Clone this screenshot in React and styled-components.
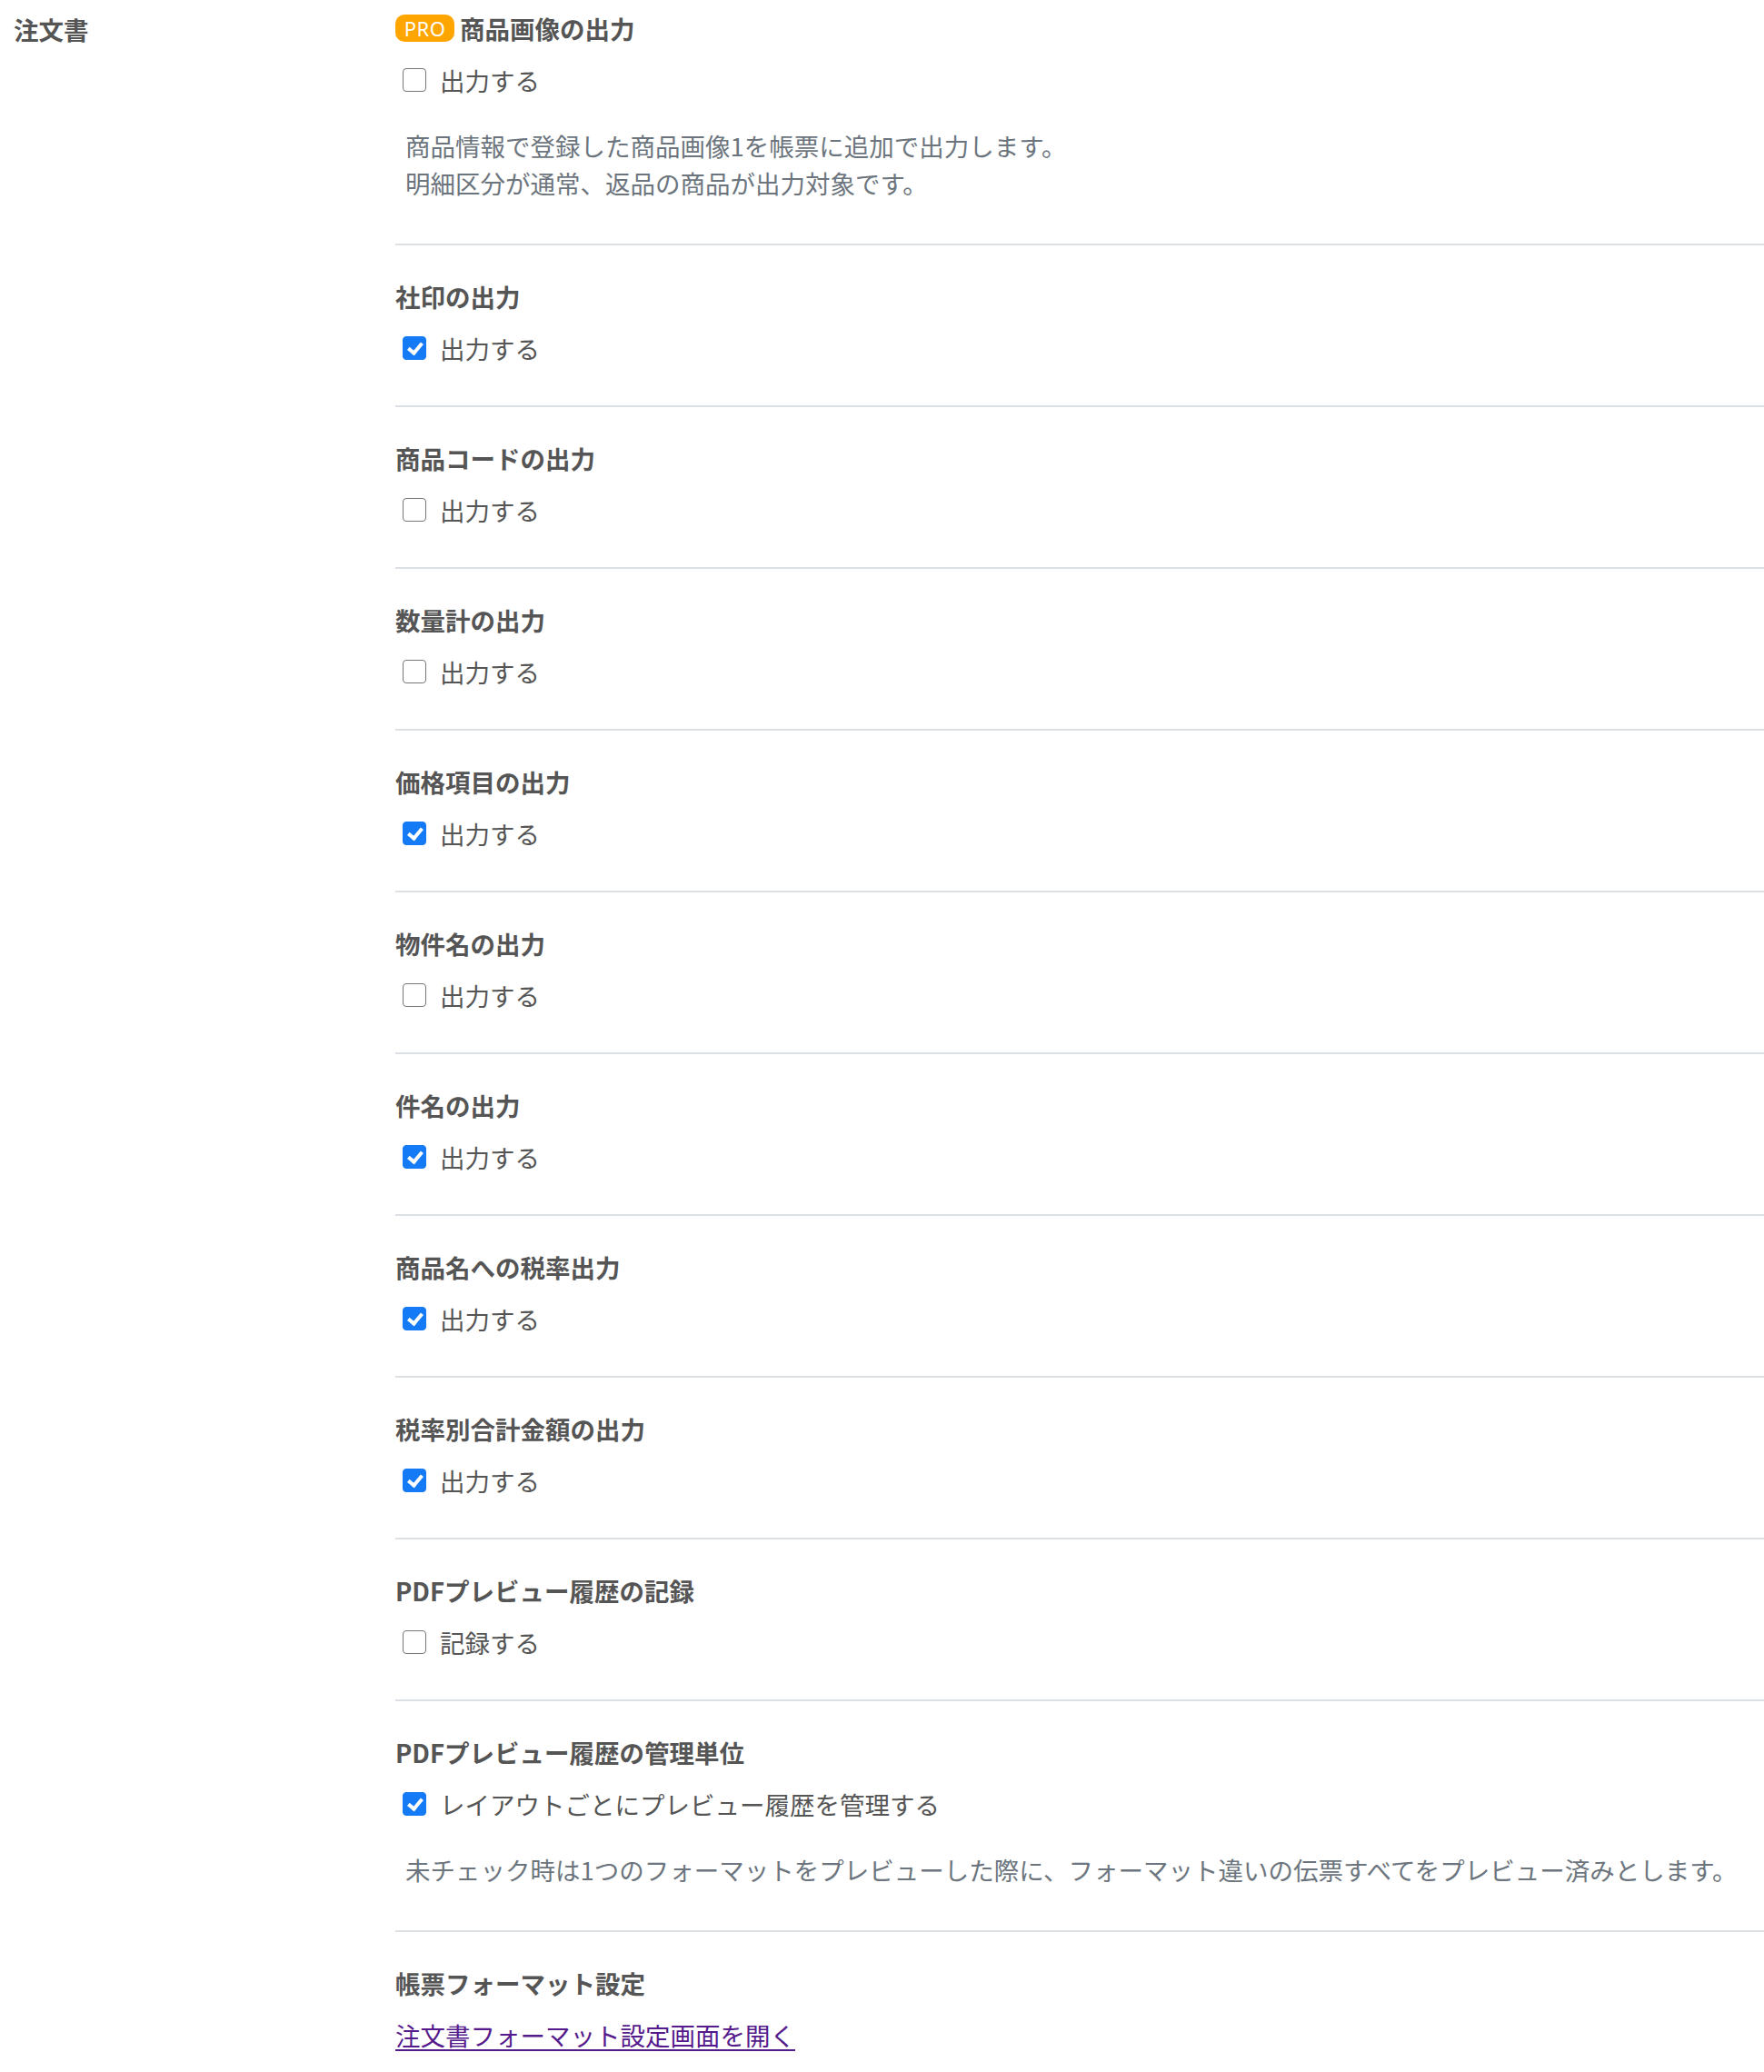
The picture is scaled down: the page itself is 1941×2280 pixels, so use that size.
import styled, { createGlobalStyle } from 'styled-components';

const GlobalStyle = createGlobalStyle`
    body {
        margin: 0;
        background: #fff;
        font-family: 'Noto Sans CJK JP', 'Noto Sans', sans-serif;
        color: #555;
    }
`;

const settings = [
    {
        title: '商品画像の出力',
        pro: true,
        option: '出力する',
        checked: false,
        notes: [
            '商品情報で登録した商品画像1を帳票に追加で出力します。',
            '明細区分が通常、返品の商品が出力対象です。',
        ],
    },
    { title: '社印の出力', option: '出力する', checked: true },
    { title: '商品コードの出力', option: '出力する', checked: false },
    { title: '数量計の出力', option: '出力する', checked: false },
    { title: '価格項目の出力', option: '出力する', checked: true },
    { title: '物件名の出力', option: '出力する', checked: false },
    { title: '件名の出力', option: '出力する', checked: true },
    { title: '商品名への税率出力', option: '出力する', checked: true },
    { title: '税率別合計金額の出力', option: '出力する', checked: true },
    { title: 'PDFプレビュー履歴の記録', option: '記録する', checked: false },
    {
        title: 'PDFプレビュー履歴の管理単位',
        option: 'レイアウトごとにプレビュー履歴を管理する',
        checked: true,
        notes: [
            '未チェック時は1つのフォーマットをプレビューした際に、フォーマット違いの伝票すべてをプレビュー済みとします。',
        ],
    },
];

export default function App() {
    return (
        <>
            <GlobalStyle />
            <Page>
                <GroupLabel>注文書</GroupLabel>
                <SettingList>
                    {settings.map((s) => (
                        <Section key={s.title}>
                            <Heading>
                                {s.pro && <ProBadge>PRO</ProBadge>}
                                {s.title}
                            </Heading>
                            <OptionRow>
                                <Check type='checkbox' defaultChecked={s.checked} />
                                {s.option}
                            </OptionRow>
                            {s.notes && (
                                <Note>
                                    {s.notes.map((n) => (
                                        <div key={n}>{n}</div>
                                    ))}
                                </Note>
                            )}
                        </Section>
                    ))}
                    <Section $last>
                        <Heading>帳票フォーマット設定</Heading>
                        <FormatLink href='#'>注文書フォーマット設定画面を開く</FormatLink>
                    </Section>
                </SettingList>
            </Page>
        </>
    );
}

const Page = styled.div`
    display: grid;
    grid-template-columns: 420px 1fr;
    padding: 11px 0 0 15px;
    font-size: 27.5px;
`;

const GroupLabel = styled.div`
    font-weight: 700;
    line-height: 42px;
    color: #555;
`;

const SettingList = styled.div`
    display: flex;
    flex-direction: column;
`;

const Section = styled.section`
    display: flex;
    flex-direction: column;
    gap: 17px;
    padding: 36px 0 43px;
    border-bottom: 2px solid #dcdfe3;

    &:first-child {
        padding-top: 0;
    }

    ${(p) => p.$last && 'border-bottom: none; padding-bottom: 22px;'}
`;

const Heading = styled.h3`
    margin: 0;
    display: flex;
    align-items: center;
    gap: 6px;
    font-size: 27.5px;
    font-weight: 700;
    line-height: 40px;
    color: #555;
`;

const ProBadge = styled.span`
    display: inline-flex;
    align-items: center;
    justify-content: center;
    width: 65px;
    height: 30px;
    border-radius: 10px;
    background: #ffa500;
    color: #fff;
    font-family: 'Noto Sans', sans-serif;
    font-size: 22px;
    font-weight: 400;
    letter-spacing: 0.5px;
`;

const OptionRow = styled.label`
    display: flex;
    align-items: center;
    gap: 15px;
    padding-left: 8px;
    line-height: 40px;
    color: #555;
`;

const Check = styled.input`
    appearance: none;
    position: relative;
    margin: 0;
    width: 26px;
    height: 26px;
    flex: none;
    border: 1.5px solid #767676;
    border-radius: 4px;
    background: #fff;

    &:checked {
        border-color: #147af5;
        background: #147af5;
    }

    &:checked::after {
        content: '';
        position: absolute;
        left: 7.5px;
        top: 2.5px;
        width: 6px;
        height: 12px;
        border: solid #fff;
        border-width: 0 4px 4px 0;
        transform: rotate(40deg);
    }
`;

const Note = styled.div`
    margin: 15px 0 3px;
    padding-left: 11px;
    line-height: 41px;
    color: #6c757d;
`;

const FormatLink = styled.a`
    align-self: flex-start;
    line-height: 40px;
    color: #551a8b;
    text-decoration: underline;
    text-underline-offset: 4px;
`;
